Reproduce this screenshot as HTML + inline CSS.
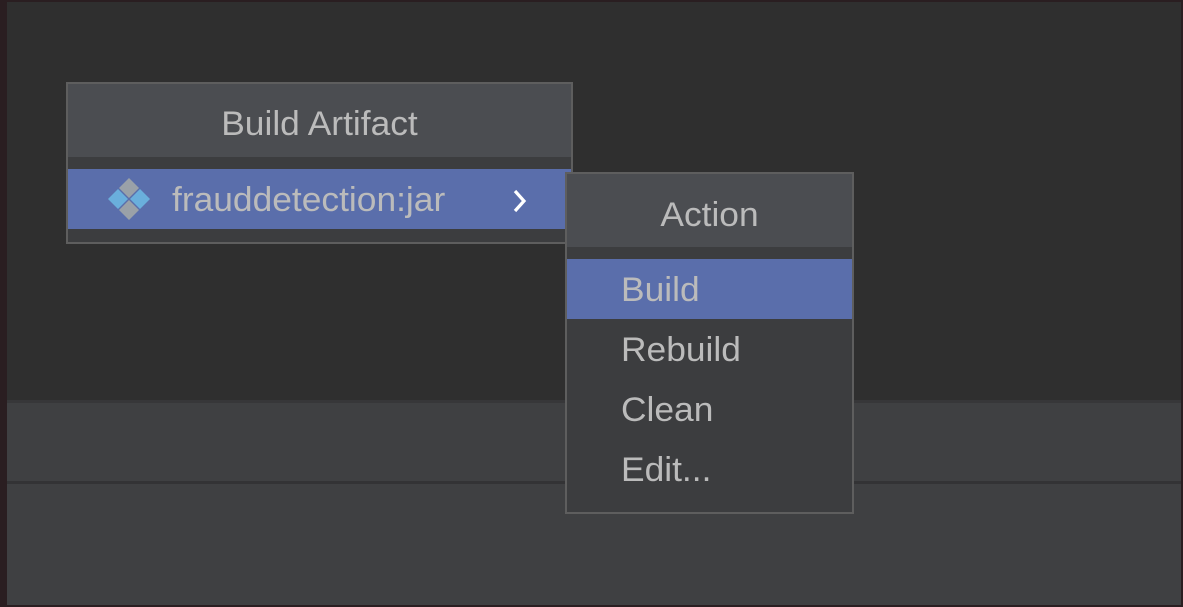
<!DOCTYPE html>
<html><head><style>
body{margin:0;width:1183px;height:607px;background:#2a1e21;position:relative;overflow:hidden;font-family:"Liberation Sans",sans-serif;color:#bbbbbb}
.a{position:absolute}
.t{font-size:34px;line-height:60px;white-space:nowrap;transform:scaleX(1.04);transform-origin:left center}
.c{transform-origin:center center}
</style></head><body>
<div class="a" style="left:7px;top:2px;width:1174px;height:603px;background:#2f2f2f"></div>
<div class="a" style="left:7px;top:400px;width:1174px;height:3px;background:#373739"></div>
<div class="a" style="left:7px;top:403px;width:1174px;height:78px;background:#3f4042"></div>
<div class="a" style="left:7px;top:481px;width:1174px;height:3px;background:#333335"></div>
<div class="a" style="left:7px;top:484px;width:1174px;height:121px;background:#3f4042"></div>

<div class="a" style="left:66px;top:82px;width:503px;height:158px;border:2px solid #5e5e5e;background:#3c3d3f">
  <div class="a" style="left:0;top:0;width:503px;height:73px;background:#4b4d51"></div>
  <div class="a t c" style="left:0;top:10px;width:503px;text-align:center">Build Artifact</div>
  <div class="a" style="left:0;top:85px;width:503px;height:60px;background:#5a6eab"></div>
  <div class="a t" style="left:104px;top:86px">frauddetection:jar</div>
  <svg class="a" style="left:442px;top:103px" width="20" height="28" viewBox="0 0 20 28"><path d="M5 4 L14 14 L5 24" stroke="#fff" stroke-width="3.2" fill="none"/></svg>
</div>
<svg class="a" style="left:108px;top:178px" width="42" height="42" viewBox="0 0 42 42">
  <path d="M21 0 L31 10 L21 20 L11 10Z" fill="#9aa1a8"/>
  <path d="M21 22 L31 32 L21 42 L11 32Z" fill="#9aa1a8"/>
  <path d="M10 11 L20 21 L10 31 L0 21Z" fill="#6aafdc"/>
  <path d="M32 11 L42 21 L32 31 L22 21Z" fill="#6aafdc"/>
</svg>

<div class="a" style="left:565px;top:172px;width:285px;height:338px;border:2px solid #5e5e5e;background:#3c3d3f">
  <div class="a" style="left:0;top:0;width:285px;height:73px;background:#4b4d51"></div>
  <div class="a t c" style="left:0;top:11px;width:285px;text-align:center">Action</div>
  <div class="a" style="left:0;top:85px;width:285px;height:60px;background:#5a6eab"></div>
  <div class="a t" style="left:54px;top:86px">Build</div>
  <div class="a t" style="left:54px;top:146px">Rebuild</div>
  <div class="a t" style="left:54px;top:206px">Clean</div>
  <div class="a t" style="left:54px;top:266px">Edit...</div>
</div>
</body></html>
